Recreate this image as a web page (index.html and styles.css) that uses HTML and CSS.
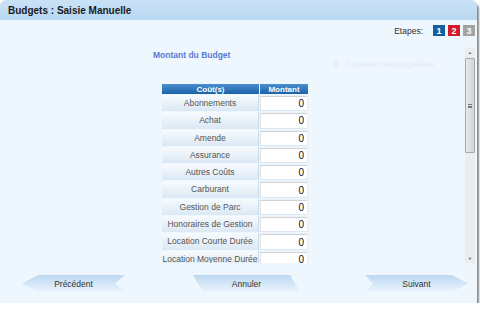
FILE: index.html
```html
<!DOCTYPE html>
<html>
    <head>
        <meta charset="utf-8">
        <title>Budgets : Saisie Manuelle</title>
        <link rel="stylesheet" href="styles.css">
    </head>
    <body>
        <div class="window">
            <div class="title">Budgets : Saisie Manuelle</div>

            <div class="steps">
                <span class="steps_label">Etapes:</span>
                <span class="step step_done">1</span>
                <span class="step step_current">2</span>
                <span class="step step_todo">3</span>
            </div>

            <div class="main">
                <div class="scroll">
                    <div class="watermark"><span class="watermark_dot"></span>Capture rectangulaire</div>
                    <div class="budget_title">Montant du Budget</div>

                    <div class="budget">
                        <div class="head">Coût(s)</div>
                        <div class="head">Montant</div>

                        <div class="label">Abonnements</div>
                        <div class="amount"><input value="0"></div>
                        <div class="label">Achat</div>
                        <div class="amount"><input value="0"></div>
                        <div class="label">Amende</div>
                        <div class="amount"><input value="0"></div>
                        <div class="label">Assurance</div>
                        <div class="amount"><input value="0"></div>
                        <div class="label">Autres Coûts</div>
                        <div class="amount"><input value="0"></div>
                        <div class="label">Carburant</div>
                        <div class="amount"><input value="0"></div>
                        <div class="label">Gestion de Parc</div>
                        <div class="amount"><input value="0"></div>
                        <div class="label">Honoraires de Gestion</div>
                        <div class="amount"><input value="0"></div>
                        <div class="label">Location Courte Durée</div>
                        <div class="amount"><input value="0"></div>
                        <div class="label">Location Moyenne Durée</div>
                        <div class="amount"><input value="0"></div>
                    </div>
                </div>

                <div class="scrollbar">
                    <div class="sb_arrow">&#9650;</div>
                    <div class="sb_track">
                        <div class="sb_thumb"><span class="sb_grip"></span></div>
                    </div>
                    <div class="sb_arrow">&#9660;</div>
                </div>
            </div>

            <div class="buttons">
                <div class="btn btn_prev"><span>Précédent</span></div>
                <div class="btn btn_cancel"><span>Annuler</span></div>
                <div class="btn btn_next"><span>Suivant</span></div>
            </div>
        </div>
    </body>
</html>
```

FILE: styles.css
```css
body{
    margin: 0;
    background-color: white;
    font-family: "Liberation Sans", Arial, sans-serif;
}

.window{
    width: 477px;
    height: 303px;
    background-color: #eef6fe;
    border-radius: 6px 6px 0 0;
    box-shadow: 2px 3px 2px #8a8a8a;
    overflow: hidden;
    display: flex;
    flex-direction: column;
}

.title{
    height: 20px;
    line-height: 21px;
    padding-left: 8px;
    font-size: 10px;
    font-weight: bold;
    color: #1a1a1a;
    background: linear-gradient(#c9e2f7, #b9d8f2);
}

.steps{
    display: flex;
    justify-content: flex-end;
    align-items: center;
    gap: 2px;
    height: 11px;
    margin-top: 5px;
    padding-right: 2px;
}

.steps_label{
    font-size: 8.5px;
    color: #333;
    margin-right: 8px;
}

.step{
    width: 12px;
    height: 11px;
    line-height: 12px;
    text-align: center;
    color: white;
    font-size: 9px;
    font-weight: bold;
}
.step_done{ background-color: #13609f; }
.step_current{ background-color: #d31a2b; margin-left: 1px; }
.step_todo{ background-color: #a3a3a3; margin-left: 1px; }

.main{
    display: flex;
    height: 217px;
    margin-top: 10px;
    padding-left: 8px;
}

.scroll{
    flex: 1;
    overflow: hidden;
    position: relative;
    padding-top: 4px;
}

.watermark{
    position: absolute;
    left: 326px;
    top: 13px;
    font-size: 8.5px;
    font-weight: bold;
    color: #e6eef7;
    display: flex;
    align-items: center;
    gap: 8px;
}
.watermark_dot{
    width: 4px;
    height: 4px;
    border-radius: 2px;
    background-color: #e2ebf5;
}

.budget_title{
    margin-left: 145px;
    font-size: 8.5px;
    font-weight: bold;
    color: #5a7ad4;
    line-height: 11px;
}

.budget{
    display: grid;
    grid-template-columns: 97px 48px;
    grid-template-rows: 10px;
    grid-auto-rows: 16.3px;
    gap: 1px;
    width: 146px;
    margin: 23px 0 0 154px;
}

.head{
    background: linear-gradient(#4a8fd0, #1c62a6);
    color: white;
    font-size: 8px;
    font-weight: bold;
    text-align: center;
    line-height: 11px;
}

.label{
    background: linear-gradient(#f7fbfe, #dbe8f4);
    border-right: 1px solid #c7dbee;
    color: #555;
    font-size: 8.5px;
    text-align: center;
    line-height: 17px;
    white-space: nowrap;
    overflow: hidden;
}

.amount{
    background: linear-gradient(#eaf3fb, #dbe8f4);
    padding: 1px 1px 1px 0;
}

.amount input{
    display: block;
    box-sizing: border-box;
    width: 47px;
    height: 14.3px;
    margin: 0;
    border: none;
    border-top: 1px solid #d3d3d3;
    border-left: 1px solid #e2e2e2;
    background-color: white;
    padding: 0 3px 0 0;
    text-align: right;
    font-family: "Liberation Sans", Arial, sans-serif;
    font-size: 10px;
    line-height: 13px;
    color: #111;
}

.scrollbar{
    width: 10px;
    margin-right: 2px;
    margin-top: 2px;
    display: flex;
    flex-direction: column;
    background-color: #ececec;
}

.sb_arrow{
    height: 9px;
    font-size: 4px;
    line-height: 9px;
    text-align: center;
    color: #555;
}

.sb_track{
    flex: 1;
}

.sb_thumb{
    box-sizing: border-box;
    height: 95px;
    margin-top: 1px;
    border: 1px solid #a9a9a9;
    border-radius: 1px;
    background: linear-gradient(to right, #e9e9e9, #d4d4d4);
    display: flex;
    align-items: center;
    justify-content: center;
}

.sb_grip{
    width: 4px;
    height: 4px;
    border-top: 1px solid #777;
    border-bottom: 1px solid #777;
    box-sizing: border-box;
    position: relative;
}
.sb_grip::after{
    content: "";
    position: absolute;
    left: 0;
    right: 0;
    top: 1px;
    border-top: 1px solid #777;
}

.buttons{
    display: flex;
    align-items: center;
    height: 17px;
    margin-top: 12px;
}

.btn{
    height: 17px;
    font-size: 8.5px;
    color: #333;
    display: flex;
    align-items: center;
    justify-content: center;
    background: linear-gradient(#bcd8f1, #eaf4fd);
}

.btn_prev{
    width: 103px;
    margin-left: 22px;
    clip-path: polygon(0 50%, 16px 0, 100% 0, calc(100% - 10px) 50%, 100% 100%, 16px 100%);
}

.btn_cancel{
    width: 107px;
    margin-left: 68px;
    clip-path: polygon(0 0, 97px 0, 100% 100%, 10px 100%);
}

.btn_next{
    width: 103px;
    margin-left: 65px;
    clip-path: polygon(0 0, calc(100% - 16px) 0, 100% 50%, calc(100% - 16px) 100%, 0 100%, 8px 50%);
}
```
